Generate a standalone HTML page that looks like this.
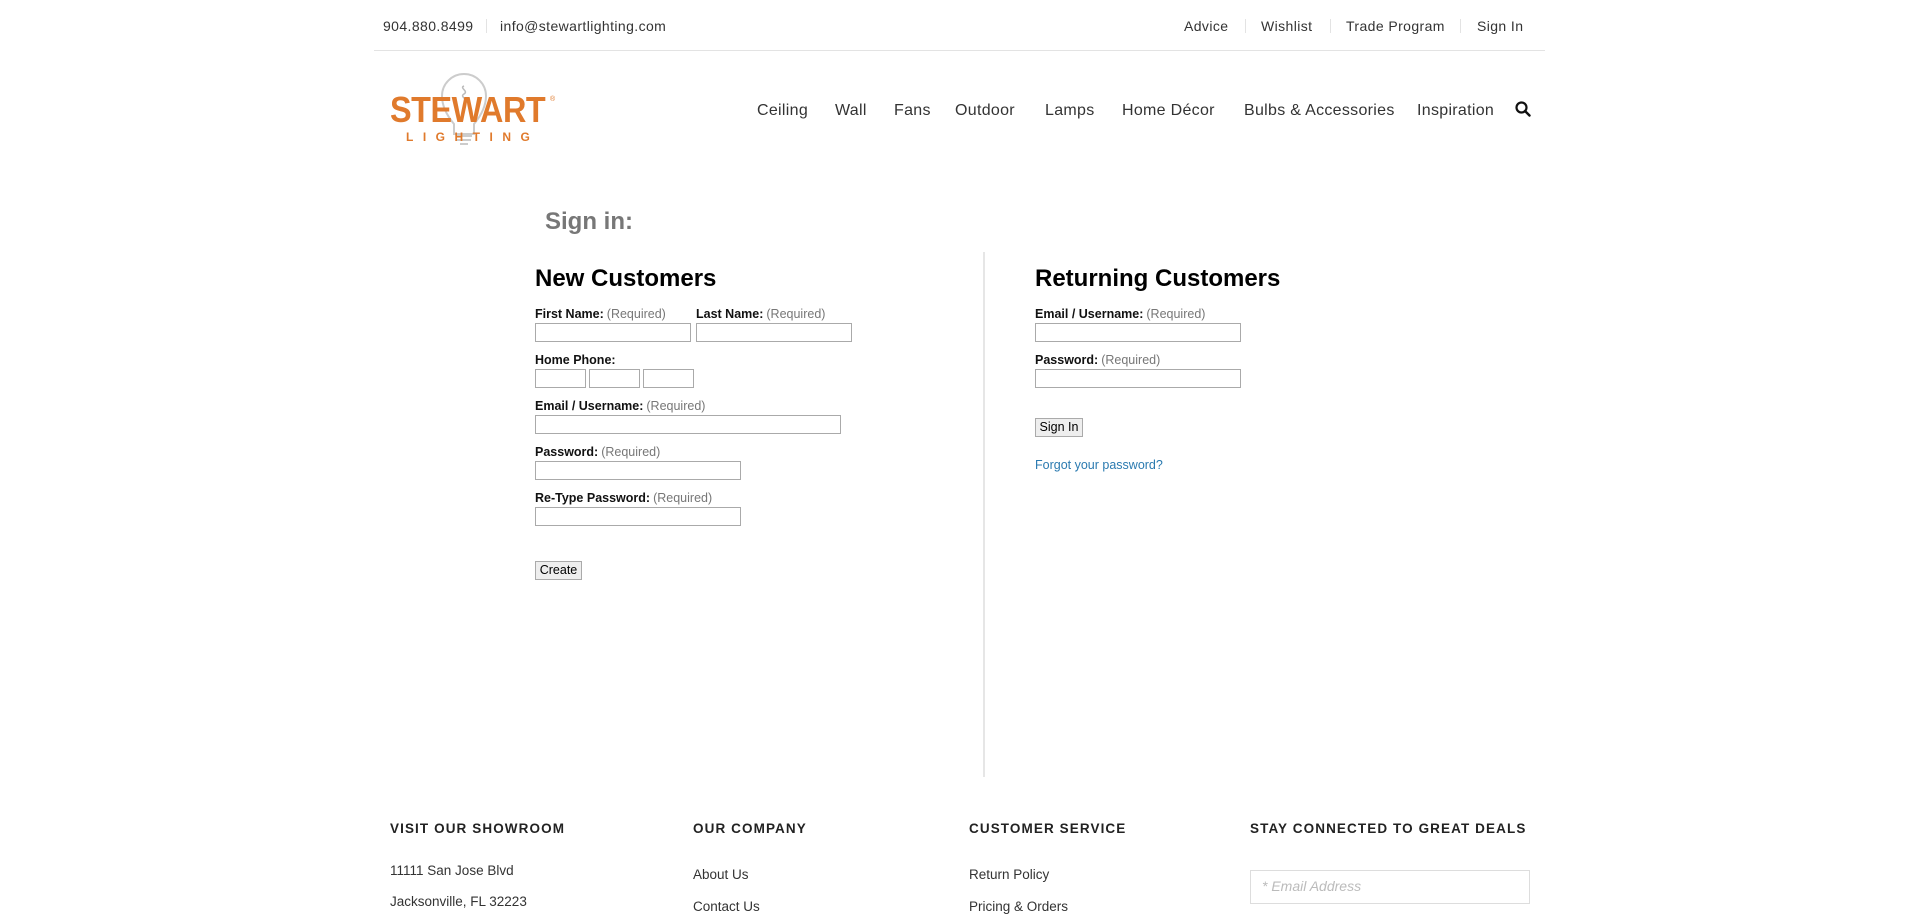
<!DOCTYPE html>
<html><head><meta charset="utf-8"><style>
*{margin:0;padding:0;box-sizing:border-box}
body{width:1912px;height:915px;background:#fff;position:relative;overflow:hidden;font-family:"Liberation Sans",sans-serif}
.a{position:absolute;white-space:nowrap}
.top{font-size:14px;color:#333;top:18px;letter-spacing:0.4px}
.sep{position:absolute;width:1px;height:14px;background:#e3e3e3;top:19px}
.nav{font-size:16px;color:#333;top:102px;letter-spacing:0.3px}
.lbl{font-size:12.5px;font-weight:bold;color:#111}
.lbl span{font-weight:normal;color:#777;margin-left:3px}
.in{position:absolute;border:1px solid #aaa;background:#fff;height:19px}
.btn{position:absolute;border:1px solid #aaa;background:#eee;height:19px;font-size:12.5px;color:#000;text-align:center;line-height:17px}
h2{position:absolute;font-size:24px;font-weight:bold;color:#000;white-space:nowrap}
.fh{font-size:13.5px;font-weight:bold;color:#222;letter-spacing:1.1px;top:821px}
.fl{font-size:13.5px;color:#333}
</style></head><body>
<div class="a top" style="left:383px">904.880.8499</div>
<div class="sep" style="left:486px"></div>
<div class="a top" style="left:500px">info@stewartlighting.com</div>
<div class="a top" style="left:1184px">Advice</div>
<div class="sep" style="left:1245px"></div>
<div class="a top" style="left:1261px">Wishlist</div>
<div class="sep" style="left:1330px"></div>
<div class="a top" style="left:1346px">Trade Program</div>
<div class="sep" style="left:1460px"></div>
<div class="a top" style="left:1477px">Sign In</div>
<div class="a" style="left:374px;top:50px;width:1171px;height:1px;background:#e3e3e3"></div>

<svg class="a" style="left:440px;top:72px" width="56" height="76" viewBox="0 0 56 76"><path d="M14 52 C4 40 2 30 2 24 A22 22 0 0 1 46 24 C46 30 44 40 34 52 L34 62 L14 62 Z" fill="none" stroke="#ccc" stroke-width="2"/><path d="M16 64h16M17 68h14M20 72h8" stroke="#ccc" stroke-width="2"/><path d="M24 14c-5 2 5 5 0 8s5 5 0 8" fill="none" stroke="#bbb" stroke-width="1.5"/></svg>
<div class="a" style="left:390px;top:89px;font-size:36px;font-weight:bold;color:#e07a2c;letter-spacing:-0.5px;transform:scaleX(0.9);transform-origin:left">STEWART</div>
<div class="a" style="left:550px;top:96px;font-size:7px;color:#e07a2c">®</div>
<div class="a" style="left:406px;top:130px;font-size:12px;font-weight:bold;color:#e07a2c;letter-spacing:9.5px">LIGHTING</div>

<div class="a nav" style="left:757px">Ceiling</div>
<div class="a nav" style="left:835px">Wall</div>
<div class="a nav" style="left:894px">Fans</div>
<div class="a nav" style="left:955px">Outdoor</div>
<div class="a nav" style="left:1045px">Lamps</div>
<div class="a nav" style="left:1122px">Home Décor</div>
<div class="a nav" style="left:1244px">Bulbs &amp; Accessories</div>
<div class="a nav" style="left:1417px">Inspiration</div>
<svg class="a" style="left:1515px;top:101px" width="16" height="16" viewBox="0 0 16 16"><circle cx="6.5" cy="6.5" r="5" fill="none" stroke="#111" stroke-width="2.2"/><path d="M10 10l4.5 4.5" stroke="#111" stroke-width="2.4" stroke-linecap="round"/></svg>

<div class="a" style="left:545px;top:208px;font-size:24px;font-weight:bold;color:#777">Sign in:</div>
<div class="a" style="left:983px;top:252px;width:2px;height:525px;background:#e6e6e6"></div>

<h2 style="left:535px;top:265px">New Customers</h2>
<div class="a lbl" style="left:535px;top:307px">First Name:<span>(Required)</span></div>
<div class="a lbl" style="left:696px;top:307px">Last Name:<span>(Required)</span></div>
<div class="in" style="left:535px;top:323px;width:156px"></div>
<div class="in" style="left:696px;top:323px;width:156px"></div>
<div class="a lbl" style="left:535px;top:353px">Home Phone:</div>
<div class="in" style="left:535px;top:369px;width:51px"></div>
<div class="in" style="left:589px;top:369px;width:51px"></div>
<div class="in" style="left:643px;top:369px;width:51px"></div>
<div class="a lbl" style="left:535px;top:399px">Email / Username:<span>(Required)</span></div>
<div class="in" style="left:535px;top:415px;width:306px"></div>
<div class="a lbl" style="left:535px;top:445px">Password:<span>(Required)</span></div>
<div class="in" style="left:535px;top:461px;width:206px"></div>
<div class="a lbl" style="left:535px;top:491px">Re-Type Password:<span>(Required)</span></div>
<div class="in" style="left:535px;top:507px;width:206px"></div>
<div class="btn" style="left:535px;top:561px;width:47px">Create</div>

<h2 style="left:1035px;top:265px">Returning Customers</h2>
<div class="a lbl" style="left:1035px;top:307px">Email / Username:<span>(Required)</span></div>
<div class="in" style="left:1035px;top:323px;width:206px"></div>
<div class="a lbl" style="left:1035px;top:353px">Password:<span>(Required)</span></div>
<div class="in" style="left:1035px;top:369px;width:206px"></div>
<div class="btn" style="left:1035px;top:418px;width:48px">Sign In</div>
<div class="a" style="left:1035px;top:458px;font-size:12.5px;color:#2a7ab0">Forgot your password?</div>

<div class="a fh" style="left:390px">VISIT OUR SHOWROOM</div>
<div class="a fh" style="left:693px">OUR COMPANY</div>
<div class="a fh" style="left:969px">CUSTOMER SERVICE</div>
<div class="a fh" style="left:1250px">STAY CONNECTED TO GREAT DEALS</div>
<div class="a fl" style="left:390px;top:863px">11111 San Jose Blvd</div>
<div class="a fl" style="left:390px;top:894px">Jacksonville, FL 32223</div>
<div class="a fl" style="left:693px;top:867px">About Us</div>
<div class="a fl" style="left:693px;top:899px">Contact Us</div>
<div class="a fl" style="left:969px;top:867px">Return Policy</div>
<div class="a fl" style="left:969px;top:899px">Pricing &amp; Orders</div>
<div class="a" style="left:1250px;top:870px;width:280px;height:34px;border:1px solid #ddd"></div>
<div class="a" style="left:1262px;top:878px;font-size:14px;font-style:italic;color:#bbb">* Email Address</div>
</body></html>
